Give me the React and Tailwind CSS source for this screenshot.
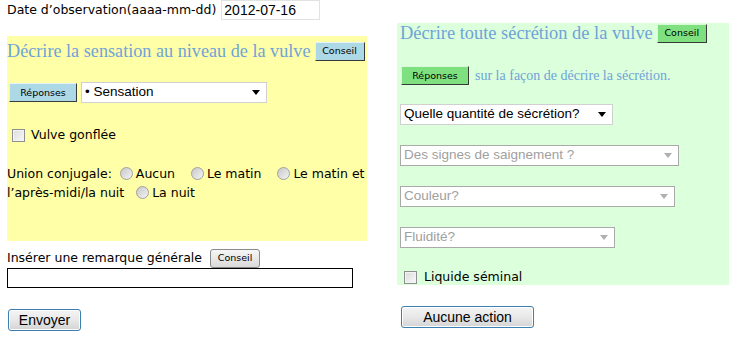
import React from 'react';

const sans = "font-['DejaVu_Sans',sans-serif]";
const arial = "font-['Liberation_Sans',Arial,sans-serif]";
const serif = "font-['Liberation_Serif','Times_New_Roman',serif]";

// small triangle for the drop-down boxes
function Arrow({ disabled }) {
  return (
    <svg width="8" height="5" viewBox="0 0 8 5" className="shrink-0">
      <path d="M0 0 L8 0 L4 5 Z" fill={disabled ? '#b0b0b0' : '#000'} />
    </svg>
  );
}

function Select({ label, width, disabled }) {
  return (
    <div
      className={`h-[21px] flex items-center justify-between bg-white border ${
        disabled ? 'border-[#a9a9a9] text-[#a0a0a0]' : 'border-[#d0d0d0] text-black'
      } pl-[3px] pr-[6px] ${arial} text-[13.5px]`}
      style={{ width }}
    >
      <span className="whitespace-nowrap">{label}</span>
      <Arrow disabled={disabled} />
    </div>
  );
}

function Checkbox() {
  return (
    <span className="inline-block w-[13px] h-[13px] border border-[#8e8f8f] bg-gradient-to-br from-[#dcdcdc] to-[#f8f8f8] shadow-[inset_0_0_0_1px_#f4f4f4]" />
  );
}

function Radio() {
  return (
    <span className="inline-block w-[13px] h-[13px] rounded-full border border-[#a0a0a0] bg-gradient-to-br from-[#c8c8c8] to-[#f4f4f4] align-[-2px] mr-[3px]" />
  );
}

function Conseil({ tone }) {
  const tones = {
    blue: 'bg-[#add8e6] border-t-[#e6f2f6] border-l-[#e6f2f6] border-r-[#3a3a3a] border-b-[#3a3a3a]',
    green: 'bg-[#7fe07f] border-t-[#d8f8d8] border-l-[#d8f8d8] border-r-[#3a3a3a] border-b-[#3a3a3a]',
    gray: 'bg-gradient-to-b from-[#f6f6f6] to-[#dadada] border-[#8a8a8a] rounded-[3px]',
  };
  return (
    <button className={`h-[19px] w-[50px] border ${tones[tone]} ${sans} text-[9.5px] text-black leading-none`}>
      Conseil
    </button>
  );
}

function Reponses({ tone }) {
  const bg = tone === 'blue'
    ? 'bg-[#add8e6] border-t-[#e6f2f6] border-l-[#e6f2f6]'
    : 'bg-[#7fe07f] border-t-[#d8f8d8] border-l-[#d8f8d8]';
  return (
    <button className={`h-[19px] w-[68px] border border-r-[#3a3a3a] border-b-[#3a3a3a] ${bg} ${sans} text-[9.5px] text-black leading-none`}>
      Réponses
    </button>
  );
}

function BigButton({ children, width }) {
  return (
    <button
      className={`h-[22px] rounded-[3px] border border-[#3c7fb1] bg-gradient-to-b from-[#f4f4f4] via-[#e8e8e8] to-[#d4d4d4] ${arial} text-[14px] text-black leading-none shadow-[inset_0_0_0_1px_#fff]`}
      style={{ width }}
    >
      {children}
    </button>
  );
}

export default function App() {
  return (
    <div className={`w-[729px] h-[341px] bg-white flex ${sans} text-[12.5px] text-black overflow-hidden`}>
      {/* Left column */}
      <div className="w-[397px] pl-[7px] flex flex-col">
        <div className="h-[20px] flex items-center">
          <span className="whitespace-nowrap">Date d’observation(aaaa-mm-dd)</span>
          <div className={`ml-[5px] w-[99px] h-[20px] border border-[#e2e2e2] pl-[2px] ${arial} text-[14px] leading-[18px]`}>
            2012-07-16
          </div>
        </div>

        <div className="mt-[16px] w-[360px] h-[205px] bg-[#ffffa8] flex flex-col">
          <div className="mt-[4px] flex items-center">
            <h2 className={`${serif} text-[18.2px] text-[#6fa3d8] leading-[22px] whitespace-nowrap`}>
              Décrire la sensation au niveau de la vulve
            </h2>
            <div className="ml-[4px]"><Conseil tone="blue" /></div>
          </div>

          <div className="mt-[20px] flex items-center pl-[2px]">
            <Reponses tone="blue" />
            <div className="ml-[4px]"><Select label="• Sensation" width={186} /></div>
          </div>

          <div className="mt-[23px] flex items-center pl-[5px]">
            <Checkbox />
            <span className="ml-[6px]">Vulve gonflée</span>
          </div>

          <p className="mt-[19px] leading-[19px] pr-[2px]">
            Union conjugale:&nbsp;&nbsp;<Radio />Aucun&nbsp;&nbsp;&nbsp;&nbsp;<Radio />Le matin&nbsp;&nbsp;&nbsp;&nbsp;<Radio />Le matin et
            l’après-midi/la nuit&nbsp;&nbsp;&nbsp;<Radio />La nuit
          </p>
        </div>

        <div className="mt-[8px] flex items-center h-[18px]">
          <span>Insérer une remarque générale</span>
          <div className="ml-[8px]"><Conseil tone="gray" /></div>
        </div>
        <div className="mt-[1px] w-[346px] h-[20px] border border-black bg-white" />

        <div className="mt-[21px] pl-[1px]">
          <BigButton width={73}>Envoyer</BigButton>
        </div>
      </div>

      {/* Right column */}
      <div className="flex-1 flex flex-col pt-[23px]">
        <div className="h-[262px] bg-[#dcffdc] pl-[3px] flex flex-col">
          <div className="flex items-center">
            <h2 className={`${serif} text-[18.4px] text-[#6fa3d8] leading-[20px] whitespace-nowrap`}>
              Décrire toute sécrétion de la vulve
            </h2>
            <div className="ml-[4px]"><Conseil tone="green" /></div>
          </div>

          <div className="mt-[22px] flex items-center pl-[1px]">
            <Reponses tone="green" />
            <span className={`ml-[6px] ${serif} text-[14px] text-[#6fa3d8]`}>
              sur la façon de décrire la sécrétion.
            </span>
          </div>

          <div className="mt-[18px]"><Select label="Quelle quantité de sécrétion?" width={213} /></div>
          <div className="mt-[20px]"><Select label="Des signes de saignement ?" width={279} disabled /></div>
          <div className="mt-[20px]"><Select label="Couleur?" width={275} disabled /></div>
          <div className="mt-[20px]"><Select label="Fluidité?" width={215} disabled /></div>

          <div className="mt-[20px] flex items-center pl-[4px]">
            <Checkbox />
            <span className="ml-[7px]">Liquide séminal</span>
          </div>
        </div>

        <div className="mt-[21px] pl-[4px]">
          <BigButton width={133}>Aucune action</BigButton>
        </div>
      </div>
    </div>
  );
}
